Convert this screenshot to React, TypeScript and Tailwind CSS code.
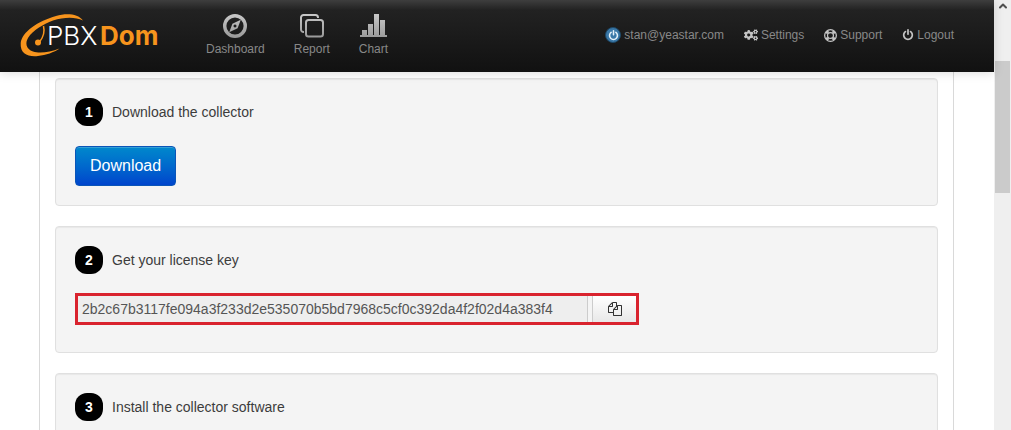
import type { ReactNode } from 'react';
import { FaCogs } from 'react-icons/fa';
import { ChevronUp } from 'lucide-react';

const POWER =
  'M1664 896q0 156-61 298t-164 245-245 164-298 61-298-61-245-164-164-245-61-298q0-182 80.5-343t226.5-270q43-32 95.5-25t83.5 50q32 42 24.5 94.5t-49.5 84.5q-98 74-151.5 181t-53.5 228q0 104 40.5 198.5t109.5 163.5 163.5 109.5 198.5 40.5 198.5-40.5 163.5-109.5 109.5-163.5 40.5-198.5q0-121-53.5-228t-151.5-181q-42-32-49.5-84.5t24.5-94.5q31-43 84-50t95 25q146 109 226.5 270t80.5 343zm-640-768v640q0 52-38 90t-90 38-90-38-38-90v-640q0-52 38-90t90-38 90 38 38 90z';
const FILES =
  'M1696 384q40 0 68 28t28 68v1216q0 40-28 68t-68 28h-960q-40 0-68-28t-28-68v-288h-544q-40 0-68-28t-28-68v-672q0-40 20-88t48-76l408-408q28-28 76-48t88-20h416q40 0 68 28t28 68v328q68-40 128-40h416zm-544 213l-299 299h299v-299zm-640-384l-299 299h299v-299zm196 647l316-316v-416h-384v416q0 40-28 68t-68 28h-416v640h512v-256q0-40 20-88t48-76zm956 804v-1152h-384v416q0 40-28 68t-68 28h-416v640h896z';

function Logo() {
  return (
    <svg viewBox="0 0 142 46" className="h-[46px] w-[142px]" role="img" aria-label="PBXDom">
      <path
        fill="#f7941d"
        d="M63 7.500C58 .5 46 0 36 3 18 8 2 19 .7 30 0 41 8 44 18 43 26 42 34 39.500 39.500 35.500 30 39 20 41 13 38.500 6 36 5 30 8 25 13 17 23 11.500 33 7.500 44 4 55 3.500 63 7.500Z"
      />
      <path d="M23.500 13c1.500 6 0 11-4 16" fill="none" stroke="#f7941d" strokeWidth="1.500" />
      <circle cx="18" cy="29.500" r="3" fill="#f7941d" />
      <text x="27" y="32" className="fill-white font-['Inter',sans-serif] text-[26px] font-light">
        PBX
      </text>
      <text x="80" y="32" className="fill-[#f7941d] font-['Inter',sans-serif] text-[26px] font-bold">
        Dom
      </text>
    </svg>
  );
}

function Shade({ id }: { id: string }) {
  return (
    <defs>
      <linearGradient id={id} x1="0" y1="0" x2="0" y2="24" gradientUnits="userSpaceOnUse">
        <stop offset="0" stopColor="#c8c8c8" />
        <stop offset="1" stopColor="#999" />
      </linearGradient>
    </defs>
  );
}

function CompassIcon() {
  return (
    <svg viewBox="0 0 24 24" className="size-6" aria-hidden="true">
      <Shade id="shade-compass" />
      <circle cx="12" cy="12" r="10.300" fill="none" stroke="url(#shade-compass)" strokeWidth="3.400" />
      <path
        fill="url(#shade-compass)"
        fillRule="evenodd"
        d="M17.800 5.800 14.600 14.200 6.200 18.200 9.400 9.800ZM12 10.500a1.500 1.500 0 1 0 .01 0Z"
      />
    </svg>
  );
}

function ReportIcon() {
  return (
    <svg viewBox="0 0 24 24" className="size-6" aria-hidden="true">
      <Shade id="shade-report" />
      <g fill="none" stroke="url(#shade-report)" strokeWidth="2">
        <rect x="6" y="6" width="17" height="16.500" rx="2.500" />
        <path d="M18 4V3.500A2.500 2.500 0 0 0 15.500 1H3.500A2.500 2.500 0 0 0 1 3.500v12A2.500 2.500 0 0 0 3.500 18H4" />
      </g>
    </svg>
  );
}

function ChartIcon() {
  return (
    <svg viewBox="0 0 27 24" className="h-6 w-[27px]" aria-hidden="true">
      <Shade id="shade-chart" />
      <path
        fill="url(#shade-chart)"
        d="M0 21H2V16H7V21H8V10H13V21H14V0H19V21H20V6H25V21H27V23H0Z"
      />
    </svg>
  );
}

function GlyphIcon({ d, className }: { d: string; className: string }) {
  return (
    <svg viewBox="0 0 1792 1792" className={className} fill="currentColor" aria-hidden="true">
      <path d={d} />
    </svg>
  );
}

function LifeRingIcon() {
  return (
    <svg viewBox="0 0 14 14" className="size-[13px]" fill="none" stroke="currentColor" aria-hidden="true">
      <circle cx="7" cy="7" r="6.300" strokeWidth="1.400" />
      <circle cx="7" cy="7" r="3.200" strokeWidth="1.300" />
      <path strokeWidth="3.400" d="M4.500 4.500 2.700 2.700M9.500 4.500l1.800-1.800M4.500 9.500l-1.800 1.800M9.500 9.500l1.800 1.800" />
    </svg>
  );
}

function NavItem({ icon, label }: { icon: ReactNode; label: string }) {
  return (
    <a href="#" className="flex flex-col items-center gap-0.5 text-xs leading-[18px] text-[#888]">
      {icon}
      {label}
    </a>
  );
}

function UserLink({ icon, label }: { icon: ReactNode; label: string }) {
  return (
    <a href="#" className="flex items-center gap-[3px] text-xs text-[#888]">
      <span className="text-[#c4c4c4]">{icon}</span>
      {label}
    </a>
  );
}

function Header() {
  return (
    <header className="relative flex h-[72px] shrink-0 items-start bg-[linear-gradient(#3e3e3e,#222_10px,#111)] pr-10 pl-5 shadow-[0_1px_10px_rgba(0,0,0,0.15)]">
      <a href="#" className="mt-[13px]">
        <Logo />
      </a>
      <nav className="mt-3.5 ml-11 flex gap-[29px]">
        <NavItem icon={<CompassIcon />} label="Dashboard" />
        <NavItem icon={<ReportIcon />} label="Report" />
        <NavItem icon={<ChartIcon />} label="Chart" />
      </nav>
      <div className="mt-[27px] ml-auto flex items-center gap-5">
        <UserLink
          icon={
            <span className="flex size-4 items-center justify-center rounded-full border border-[#1d4766] bg-[#3a78a8] text-[#e4f1fa]">
              <GlyphIcon d={POWER} className="size-[11px]" />
            </span>
          }
          label="stan@yeastar.com"
        />
        <UserLink icon={<FaCogs className="size-3.5" />} label="Settings" />
        <UserLink icon={<LifeRingIcon />} label="Support" />
        <UserLink icon={<GlyphIcon d={POWER} className="size-3" />} label="Logout" />
      </div>
    </header>
  );
}

function Step({ number, title, children }: { number: number; title: string; children?: ReactNode }) {
  return (
    <section className="min-h-[120px] shrink-0 rounded border border-[#e0e0e0] bg-[#f4f4f4] p-[19px] shadow-[inset_0_1px_1px_rgba(0,0,0,0.05)]">
      <h2 className="flex items-center gap-[9px] text-sm text-[#3c3c3c]">
        <span className="flex size-7 items-center justify-center rounded-xl bg-black text-sm font-bold text-white">
          {number}
        </span>
        {title}
      </h2>
      {children}
    </section>
  );
}

function Scrollbar() {
  return (
    <div className="flex w-[17px] shrink-0 flex-col bg-[#efefef] pl-px" aria-hidden="true">
      <div className="flex h-[61px] justify-center">
        <ChevronUp className="size-3 text-[#505050]" strokeWidth={4} />
      </div>
      <div className="mr-px h-[132px] bg-[#cbcbcb]" />
    </div>
  );
}

export default function App() {
  return (
    <div className="flex h-screen overflow-hidden bg-white font-['Liberation_Sans',Arial,sans-serif]">
      <div className="flex min-w-0 flex-1 flex-col">
        <Header />
        <main className="mr-10 ml-[39px] flex min-h-0 flex-1 flex-col gap-5 overflow-hidden border-x border-[#d9d9d9] px-[15px] pt-1.5">
          <Step number={1} title="Download the collector">
            <button
              type="button"
              className="mt-5 block h-10 rounded border border-[#0a55b8] bg-linear-to-b from-[#0088cc] to-[#0044cc] px-3.5 text-base text-white shadow-[inset_0_1px_0_rgba(255,255,255,0.2)]"
            >
              Download
            </button>
          </Step>
          <Step number={2} title="Get your license key">
            <div className="mt-[19px] mb-2 flex h-8 max-w-[564px] gap-1 border-3 border-[#d9232e]">
              <input
                type="text"
                readOnly
                aria-label="License key"
                defaultValue="2b2c67b3117fe094a3f233d2e535070b5bd7968c5cf0c392da4f2f02d4a383f4"
                className="min-w-0 flex-1 border-r border-[#ccc] bg-[#eee] px-1 text-sm text-[#555] outline-none"
              />
              <button
                type="button"
                aria-label="Copy license key"
                className="flex w-11 items-center justify-center border-l border-[#ccc] bg-linear-to-b from-white to-[#e8e8e8] text-[#333]"
              >
                <GlyphIcon d={FILES} className="size-3.5" />
              </button>
            </div>
          </Step>
          <Step number={3} title="Install the collector software" />
        </main>
      </div>
      <Scrollbar />
    </div>
  );
}
